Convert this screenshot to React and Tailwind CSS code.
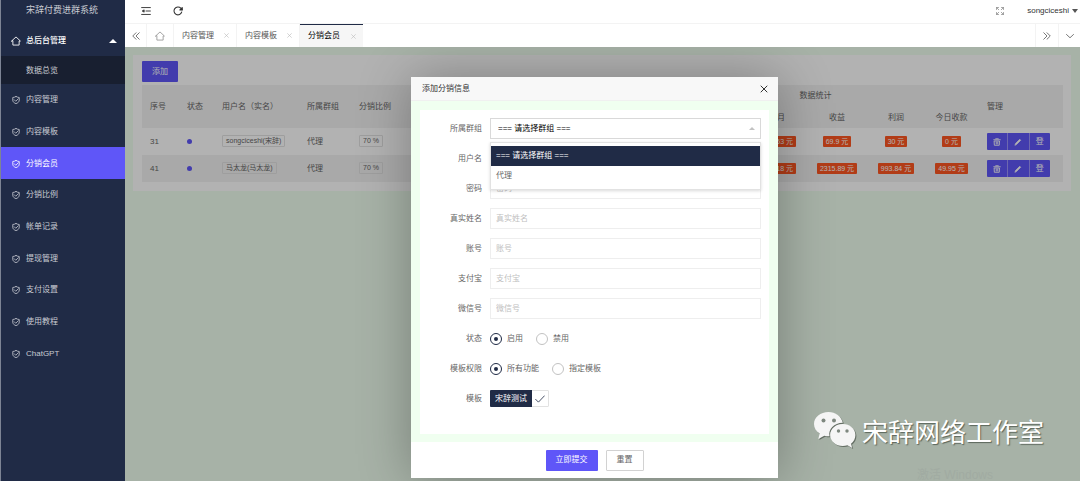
import React from "react";

const MENU = ["内容管理", "内容模板", "分销会员", "分销比例", "帐单记录", "提现管理", "支付设置", "使用教程", "ChatGPT"];
const TABS = ["内容管理", "内容模板", "分销会员"];
const ROWS = [
  { id: "31", user: "songciceshi(宋辞)", group: "代理", rate: "70 %", month: "69.53 元", income: "69.9 元", profit: "30 元", today: "0 元" },
  { id: "41", user: "马太龙(马太龙)", group: "代理", rate: "70 %", month: "815.18 元", income: "2315.89 元", profit: "993.84 元", today: "49.95 元" },
];
const FIELDS = [
  { id: "username", label: "用户名" },
  { id: "password", label: "密码" },
  { id: "realname", label: "真实姓名" },
  { id: "account", label: "账号" },
  { id: "alipay", label: "支付宝" },
  { id: "wechat", label: "微信号" },
];

function Icon({ className, children, box = "0 0 16 16", width = 1.3 }) {
  return (
    <svg aria-hidden="true" viewBox={box} className={className} fill="none" stroke="currentColor" strokeWidth={width} strokeLinecap="round" strokeLinejoin="round">
      {children}
    </svg>
  );
}

const HomeIcon = ({ className }) => (
  <Icon className={className} width={1.4}>
    <path d="M1 8 8 1.5 15 8h-2v6.5H3V8Z" />
  </Icon>
);

const ShieldIcon = () => (
  <Icon className="size-2 shrink-0" width={1.6}>
    <path d="M8 1C6 2.300 4 2.800 1.500 3v5c0 4 3 6 6.500 7.300 3.500-1.300 6.500-3.300 6.500-7.300V3C12 2.800 10 2.300 8 1Z" />
    <path d="m4.500 7.500 3 3 5-5" />
  </Icon>
);

const CloseIcon = ({ className }) => (
  <Icon className={className} width={2}>
    <path d="m2 2 12 12M14 2 2 14" />
  </Icon>
);

function Sidebar() {
  return (
    <nav className="w-[125px] shrink-0 border-l border-[#7d8494] bg-[#202b46] text-[8px] text-[#c9ccd3]">
      <h1 className="flex h-6 items-center pb-0.5 pl-[25px] text-[9px] font-normal">宋辞付费进群系统</h1>
      <a href="#admin" className="flex h-8 items-center gap-[5px] pt-px pr-2 pl-2.5 font-bold text-white">
        <HomeIcon className="size-2.5" />
        <span className="flex-1 font-medium">总后台管理</span>
        <svg aria-hidden="true" viewBox="0 0 8 4" className="h-1 w-2 fill-current"><path d="M0 4 4 0l4 4Z" /></svg>
      </a>
      <a href="#overview" className="flex h-7 items-center bg-[#181f30] pt-px pl-[25px]">数据总览</a>
      <div className="flex h-[285px] flex-col">
        {MENU.map((name) => (
          <a
            key={name}
            href={`#${name}`}
            className={`flex flex-1 items-center gap-1.5 pt-px pl-[11px] ${name === "分销会员" ? "bg-[#5f56f8] text-white" : ""}`}
          >
            <ShieldIcon />
            {name}
          </a>
        ))}
      </div>
    </nav>
  );
}

function TopBar() {
  return (
    <header className="flex h-6 items-center border-b border-[#f3f3f3] bg-white pb-0.5 pl-4 text-[#333]">
      <button type="button" aria-label="菜单" className="mr-[22px]">
        <Icon className="block size-2.5" width={1.5}>
          <path d="M1 2.500h14M8 8h7M1 13.500h14" />
          <path d="M4.500 6.500 2 8l2.500 1.500Z" fill="currentColor" />
        </Icon>
      </button>
      <button type="button" aria-label="刷新">
        <Icon className="block size-2.5" width={1.7}>
          <path d="M14 9.500A6.300 6.300 0 1 1 12.500 3.500L14.500 6" />
          <path d="M14.800 2.500V6.200H11Z" fill="currentColor" />
        </Icon>
      </button>
      <button type="button" aria-label="全屏" className="ml-auto text-[#888]">
        <Icon className="block size-2" width={1.5}>
          <path d="M1 5V1h4M1 1l4.500 4.500M11 1h4v4M15 1l-4.500 4.500M1 11v4h4M1 15l4.500-4.500M15 11v4h-4M15 15l-4.500-4.500" />
        </Icon>
      </button>
      <button type="button" className="mr-0.5 ml-[23px] flex items-center gap-[3px] text-[8px]">
        songciceshi
        <svg aria-hidden="true" viewBox="0 0 6 4" className="h-1 w-1.5 fill-[#555]"><path d="M0 0h6L3 4Z" /></svg>
      </button>
    </header>
  );
}

function TabBar() {
  return (
    <div className="flex h-[23px] bg-white text-[8px] text-[#555]">
      <button type="button" aria-label="向左" className="flex w-[22px] items-center justify-center border-r border-[#f3f3f3]">
        <Icon className="size-2" width={1.6}><path d="M8 1.500 1.500 8 8 14.500M14.500 1.500 8 8l6.500 6.500" /></Icon>
      </button>
      <button type="button" aria-label="首页" className="flex w-[27px] items-center justify-center border-r border-[#f3f3f3] text-[#999]">
        <HomeIcon className="size-2.5" />
      </button>
      {TABS.map((name) => (
        <div
          key={name}
          className={`flex w-[63px] items-center justify-between pr-[7px] pl-2 ${name === "分销会员" ? "border-t border-[#202b46] bg-[#f6f6f6] text-black" : "border-r border-[#f3f3f3]"}`}
        >
          <a href={`#tab-${name}`}>{name}</a>
          <button type="button" aria-label={`关闭${name}`} className="text-[#bbb]"><CloseIcon className="block size-[5px]" /></button>
        </div>
      ))}
      <button type="button" aria-label="向右" className="ml-auto flex w-[23px] items-center justify-center border-l border-[#f3f3f3]">
        <Icon className="size-2" width={1.6}><path d="m1.500 1.500 6.500 6.500-6.500 6.500M8 1.500 14.500 8 8 14.500" /></Icon>
      </button>
      <button type="button" aria-label="更多" className="flex w-[22px] items-center justify-center border-l border-[#f3f3f3]">
        <Icon className="size-2" width={1.6}><path d="m1 5 7 6.500L15 5" /></Icon>
      </button>
    </div>
  );
}

function Outline({ children }) {
  return <span className="inline-block rounded-[1px] border border-[#e2e2e2] px-[3px] align-middle text-[7px] leading-[10px] whitespace-nowrap">{children}</span>;
}

function Badge({ children }) {
  return <span className="inline-block rounded-[1px] bg-[#ff5722] px-[3px] align-middle text-[7px] leading-[11px] whitespace-nowrap text-white">{children}</span>;
}

function Actions() {
  return (
    <div className="flex h-[17px] w-[63px] divide-x divide-[#9c96fb] overflow-hidden rounded-[1px] bg-[#5f56f8] text-white">
      <button type="button" aria-label="删除" className="flex flex-1 items-center justify-center">
        <Icon className="size-2" width={1.8}>
          <path d="M1.500 3.500h13M5.500 1.500h5M3 6h10l-.5 8.500h-9Z" />
          <path d="M6.500 8v4M9.500 8v4" />
        </Icon>
      </button>
      <button type="button" aria-label="编辑" className="flex flex-1 items-center justify-center">
        <Icon className="size-2"><path d="M2 14 3 11 11.500 2.500 13.500 4.500 5 13Z" fill="currentColor" /></Icon>
      </button>
      <button type="button" className="flex flex-1 items-center justify-center text-[8px]">登</button>
    </div>
  );
}

function MemberTable() {
  return (
    <section className="mt-2 mr-[9px] ml-2 bg-white pt-1.5 pr-2 pb-[9px] pl-[9px]">
      <button type="button" className="block h-[21px] rounded-[1px] bg-[#5f56f8] px-2.5 text-[8px] text-white">添加</button>
      <table className="mt-[3px] w-full table-fixed text-left text-[8px] leading-3 text-[#666]">
        <colgroup>
          <col className="w-[37px]" />
          <col className="w-[35px]" />
          <col className="w-[85px]" />
          <col className="w-[52px]" />
          <col className="w-[51px]" />
          <col />
          <col className="w-[62px]" />
          <col className="w-[56px]" />
          <col className="w-[55px]" />
          <col className="w-[84px]" />
        </colgroup>
        <thead className="bg-[#f2f2f2]">
          <tr className="h-[22px]">
            <th rowSpan={2} className="pl-2 font-normal">序号</th>
            <th rowSpan={2} className="pl-2 font-normal">状态</th>
            <th rowSpan={2} className="pl-2 font-normal">用户名（实名）</th>
            <th rowSpan={2} className="pl-2 font-normal">所属群组</th>
            <th rowSpan={2} className="pl-2 font-normal">分销比例</th>
            <th colSpan={4} className="pr-0 pl-[250px] text-center font-normal">数据统计</th>
            <th rowSpan={2} className="pl-2 font-normal">管理</th>
          </tr>
          <tr className="h-[21px] text-center">
            <th className="pr-[21px] text-right font-normal">本月</th>
            <th className="font-normal">收益</th>
            <th className="font-normal">利润</th>
            <th className="font-normal">今日收款</th>
          </tr>
        </thead>
        <tbody>
          {ROWS.map((r) => (
            <tr key={r.id} className="h-[27px] even:bg-[#f2f2f2]">
              <td className="pl-2">{r.id}</td>
              <td className="pl-2"><span className="block size-[5px] rounded-full bg-[#5f56f8]" /></td>
              <td className="pl-2"><Outline>{r.user}</Outline></td>
              <td className="pl-2">{r.group}</td>
              <td className="pl-2"><Outline>{r.rate}</Outline></td>
              <td className="pr-2.5 text-right"><Badge>{r.month}</Badge></td>
              <td className="text-center"><Badge>{r.income}</Badge></td>
              <td className="text-center"><Badge>{r.profit}</Badge></td>
              <td className="text-center"><Badge>{r.today}</Badge></td>
              <td className="pl-2"><Actions /></td>
            </tr>
          ))}
        </tbody>
      </table>
    </section>
  );
}

function Radio({ name, label, checked }) {
  return (
    <label className="flex items-center gap-[5px]">
      <input
        type="radio"
        name={name}
        defaultChecked={checked}
        className="size-3 appearance-none rounded-full border border-[#c2c2c2] bg-white bg-clip-content p-[3px] checked:border-[#202b46] checked:bg-[#202b46]"
      />
      {label}
    </label>
  );
}

function Row({ label, htmlFor, children }) {
  const Label = htmlFor ? "label" : "span";
  return (
    <div className="flex h-[21px] items-center">
      <Label htmlFor={htmlFor} className="w-[70px] shrink-0 pr-2 text-right">{label}</Label>
      <div className="relative flex min-w-0 flex-1 items-center">{children}</div>
    </div>
  );
}

function Dialog() {
  return (
    <form role="dialog" aria-label="添加分销信息" className="w-[367px] bg-white text-[8px] text-[#666] shadow-[1px_1px_50px_rgba(0,0,0,0.3)]">
      <div className="flex h-6 items-center justify-between border-b border-[#f0f0f0] bg-[#f8f8f8] pr-2.5 pl-[11px] text-[#333]">
        <h2>添加分销信息</h2>
        <button type="button" aria-label="关闭"><CloseIcon className="block size-2" /></button>
      </div>
      <div className="bg-[#f0fff0] px-[9px] pt-[9px] pb-2">
        <div className="flex flex-col gap-[9px] bg-white pt-2 pr-2 pb-[25px]">
          <Row label="所属群组" htmlFor="group">
            <select id="group" className="h-[21px] w-full appearance-none border border-[#d9d9d9] bg-white pl-[7px] text-black">
              <option>=== 请选择群组 ===</option>
              <option>代理</option>
            </select>
            <svg aria-hidden="true" viewBox="0 0 6 3" className="pointer-events-none absolute right-1.5 h-[3px] w-1.5 fill-[#c2c2c2]"><path d="M0 3 3 0l3 3Z" /></svg>
            <ul className="absolute inset-x-0 top-6 z-10 border border-[#e2e2e2] bg-white py-[3px] leading-5 shadow-[0_1px_3px_rgba(0,0,0,0.15)]">
              <li className="bg-[#202b46] pl-[5px] text-white">=== 请选择群组 ===</li>
              <li className="pl-[5px]">代理</li>
            </ul>
          </Row>
          {FIELDS.map((f) => (
            <Row key={f.id} label={f.label} htmlFor={f.id}>
              <input
                id={f.id}
                type={f.id === "password" ? "password" : "text"}
                placeholder={f.label}
                className="h-[21px] w-full border border-[#eee] bg-white px-[5px] placeholder:text-[#c0c0c0]"
              />
            </Row>
          ))}
          <Row label="状态">
            <div className="flex gap-[13px]">
              <Radio name="status" label="启用" checked />
              <Radio name="status" label="禁用" />
            </div>
          </Row>
          <Row label="模板权限">
            <div className="flex gap-[13px]">
              <Radio name="scope" label="所有功能" checked />
              <Radio name="scope" label="指定模板" />
            </div>
          </Row>
          <Row label="模板">
            <label className="relative flex h-[17px] items-center rounded-[1px] border border-[#e2e2e2]">
              <input type="checkbox" defaultChecked className="absolute inset-0 appearance-none" />
              <span className="-my-px -ml-px flex h-[17px] items-center rounded-l-[1px] bg-[#202b46] px-[5px] text-white">宋辞测试</span>
              <Icon className="mx-[3px] size-2.5 text-[#202b46]"><path d="m1 8.500 4.500 4.500L15 3" /></Icon>
            </label>
          </Row>
        </div>
      </div>
      <div className="flex h-9 items-center justify-center gap-2">
        <button type="submit" className="h-[21px] rounded-[1px] bg-[#5f56f8] px-2.5 text-white">立即提交</button>
        <button type="reset" className="h-[21px] rounded-[1px] border border-[#d2d2d2] px-2.5">重置</button>
      </div>
    </form>
  );
}

function Watermark() {
  return (
    <div className="absolute right-9 bottom-7 flex items-center gap-1.5 text-[26px] leading-[38px] font-normal text-white">
      <svg aria-hidden="true" viewBox="0 0 42 37" className="mb-1 h-[37px] w-[42px] drop-shadow-[1px_1px_0_rgba(70,80,70,0.7)]">
        <path fill="#f5f5f5" d="M14.500 0C6.500 0 0 5.300 0 12c0 4 2.200 7.300 5.700 9.500L4.300 27l6-3.300c1.600.4 3.200.6 5.200.5C14 17 20 11 28.800 10.700 27.500 4.500 21.500 0 14.500 0Z" />
        <path fill="#f5f5f5" d="M28.800 12c-7 0-12.600 4.900-12.600 11s5.600 11 12.600 11c1.600 0 3.200-.3 4.600-.7l4.800 2.700-1.200-4.300c2.700-2 4.400-5.200 4.400-8.700 0-6.100-5.600-11-12.600-11Z" />
        <g fill="#7e887f">
          <circle cx="9.500" cy="8.500" r="2" /><circle cx="20" cy="8.500" r="2" />
          <circle cx="24.500" cy="19" r="1.700" /><circle cx="33" cy="19" r="1.700" />
        </g>
      </svg>
      <span className="[text-shadow:1px_1px_1px_rgba(60,70,60,0.7)]">宋辞网络工作室</span>
    </div>
  );
}

export default function App() {
  return (
    <div className="flex h-screen overflow-hidden font-['Liberation_Sans','Noto_Sans_CJK_SC',sans-serif]">
      <Sidebar />
      <div className="flex min-w-0 flex-1 flex-col">
        <TopBar />
        <TabBar />
        <main className="relative flex-1 overflow-hidden bg-[#f0fff0]">
          <MemberTable />
          <div className="absolute inset-0 flex items-start justify-center bg-black/30 pt-[30px] pr-4">
            <Dialog />
          </div>
          <Watermark />
          <p className="absolute right-[87px] bottom-0 text-[12px] leading-none text-[#a1aba2]">激活 Windows</p>
        </main>
      </div>
    </div>
  );
}
